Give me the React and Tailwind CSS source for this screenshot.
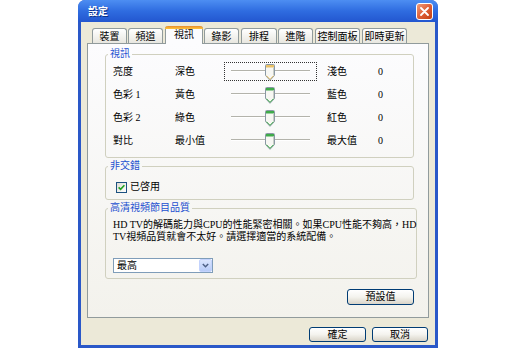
import React from "react";

const tabs = [
  { label: "裝置", w: "w-[35px]", ml: "ml-[5px]" },
  { label: "頻道", w: "w-[35px]", ml: "ml-[1px]" },
  { label: "視訊", w: "w-[38px]", ml: "ml-[2px]", active: true },
  { label: "錄影", w: "w-[35px]", ml: "ml-[1px]" },
  { label: "排程", w: "w-[36px]", ml: "ml-[2px]" },
  { label: "進階", w: "w-[35px]", ml: "ml-[1px]" },
  { label: "控制面板", w: "w-[45px]", ml: "ml-[2px]" },
  { label: "即時更新", w: "w-[45px]", ml: "ml-[2px]" },
];

const sliders = [
  { name: "亮度", low: "深色", high: "淺色", focus: true },
  { name: "色彩 1", low: "黃色", high: "藍色" },
  { name: "色彩 2", low: "綠色", high: "紅色" },
  { name: "對比", low: "最小值", high: "最大值" },
];

function Thumb({ focus }) {
  const top = focus ? "#e9c066" : "#3faa4a";
  return (
    <svg width="10" height="17" viewBox="0 0 10 17">
      <path
        d="M1.5 0.5 H8.5 Q9.5 0.5 9.5 1.5 V11.5 L5 16.3 L0.5 11.5 V1.5 Q0.5 0.5 1.5 0.5 Z"
        fill="#f7f7f3"
        stroke="#8a98a4"
      />
      <rect x="1" y="1" width="8" height="2.5" fill={top} />
      <path d="M1.4 11.6 L5 15.3 L8.6 11.6" fill="none" stroke={top} strokeWidth="1" />
      <path d="M8.5 3.5 V11.2" stroke="#c9cdc6" />
    </svg>
  );
}

function Slider({ focus }) {
  return (
    <div
      className={
        "w-[93px] h-[19px] relative flex items-center px-[6px] border border-dotted " +
        (focus ? "border-[#333]" : "border-transparent")
      }
    >
      <div className="w-full h-[2px] bg-[#b3b3ab] border-b border-white mt-[-2px]" />
      <div className="absolute left-[40px] top-[1px] flex">
        <Thumb focus={focus} />
      </div>
    </div>
  );
}

function Group({ title, children, className = "" }) {
  return (
    <fieldset className={"border border-[#d0d0bf] rounded-[3px] " + className}>
      <legend className="ml-[2px] px-[2px] h-[12px] leading-[12px] text-[10px] text-[#1b50d0]">
        {title}
      </legend>
      {children}
    </fieldset>
  );
}

function XpButton({ children, w }) {
  return (
    <div
      className={
        "h-[15px] rounded-[3px] border border-[#003c74] bg-gradient-to-b from-white via-[#f4f3ee] to-[#d9d4c8] flex items-center justify-center text-[10px] leading-none text-black " +
        w
      }
    >
      {children}
    </div>
  );
}

export default function App() {
  return (
    <div className="w-[520px] h-[348px] bg-white flex pl-[78px] font-['Liberation_Serif','Noto_Sans_CJK_TC',serif] text-[10px] text-black">
      <div className="w-[360px] h-[348px] flex flex-col rounded-t-[7px] bg-[#2a58c8] overflow-hidden">
        {/* title bar */}
        <div className="h-[22px] shrink-0 flex items-center justify-between pl-[10px] pr-[5px] bg-gradient-to-b from-[#4d8ef2] via-[#2f6ce0] to-[#2356cf]">
          <span className="text-white font-bold text-[10px] leading-none font-['Noto_Sans_CJK_TC',sans-serif] [text-shadow:1px_1px_0_#0b2f8a]">
            設定
          </span>
          <div className="w-[17px] h-[17px] rounded-[3px] border border-white bg-gradient-to-br from-[#ef9a78] via-[#df5f37] to-[#c2400f] flex items-center justify-center">
            <svg width="9" height="9" viewBox="0 0 9 9">
              <path d="M1 1 L8 8 M8 1 L1 8" stroke="white" strokeWidth="1.8" strokeLinecap="round" />
            </svg>
          </div>
        </div>

        {/* client */}
        <div className="flex-1 mx-[3px] mb-[3px] bg-[#ece9d8] flex flex-col px-[6px] pt-[4px]">
          {/* tabs */}
          <div className="h-[17px] flex items-end relative z-10">
            {tabs.map((t) =>
              t.active ? (
                <div
                  key={t.label}
                  className={
                    "h-[18px] -mb-px border-x border-[#919b9c] rounded-t-[3px] bg-[#fcfcfe] flex flex-col " +
                    t.w +
                    " " +
                    t.ml
                  }
                >
                  <div className="h-[3px] rounded-t-[3px] bg-gradient-to-b from-[#e68b2c] to-[#ffc73c] -mx-px" />
                  <div className="flex-1 flex justify-center pt-[1px] leading-[10px]">{t.label}</div>
                </div>
              ) : (
                <div
                  key={t.label}
                  className={
                    "h-[15px] border-t border-x border-[#919b9c] rounded-t-[3px] bg-gradient-to-b from-white to-[#e8e7e0] flex justify-center pt-[3px] leading-[10px] " +
                    t.w +
                    " " +
                    t.ml
                  }
                >
                  {t.label}
                </div>
              )
            )}
          </div>

          {/* panel */}
          <div className="h-[275px] shrink-0 border border-[#919b9c] bg-gradient-to-b from-[#fcfcfe] to-[#f3f2ec] flex flex-col pt-[4px] pl-[17px] pr-[14px]">
            <Group title="視訊">
              <div className="flex flex-col pl-[7px] pb-[5px]">
                {sliders.map((s) => (
                  <div key={s.name} className="h-[23px] flex items-center">
                    <span className="w-[62px] leading-none">{s.name}</span>
                    <span className="w-[49px] leading-none">{s.low}</span>
                    <Slider focus={s.focus} />
                    <span className="w-[51px] ml-[10px] leading-none">{s.high}</span>
                    <span className="leading-none">0</span>
                  </div>
                ))}
              </div>
            </Group>

            <Group title="非交錯" className="mt-[2px]">
              <div className="pt-[5px] pb-[2px] pl-[10px]">
                <div className="h-[20px] flex items-center gap-[3px]">
                  <span className="w-[11px] h-[11px] border border-[#1c5180] bg-gradient-to-br from-[#dcdcd5] to-white flex items-center justify-center">
                    <svg width="7" height="7" viewBox="0 0 7 7">
                      <path d="M0.6 3.4 L2.6 5.4 L6.4 1.2" stroke="#21a121" strokeWidth="1.6" fill="none" />
                    </svg>
                  </span>
                  <span className="leading-none">已啓用</span>
                </div>
              </div>
            </Group>

            <Group title="高清視頻節目品質" className="mt-[2px]">
              <div className="flex flex-col pl-[7px] pt-[5px] pb-[5px]">
                <p className="leading-[12px] whitespace-nowrap">
                  HD TV的解碼能力與CPU的性能緊密相關。如果CPU性能不夠高，HD
                  <br />
                  TV視頻品質就會不太好。請選擇適當的系統配備。
                </p>
                <div className="mt-[15px] w-[100px] h-[15px] border border-[#7f9db9] bg-white flex items-center">
                  <span className="flex-1 pl-[3px] leading-none">最高</span>
                  <span className="w-[13px] h-[13px] rounded-[2px] bg-gradient-to-b from-[#dbe6fd] to-[#b7cbf7] border border-[#c3d3fd] flex items-center justify-center">
                    <svg width="7" height="5" viewBox="0 0 7 5">
                      <path d="M0.8 1 L3.5 3.7 L6.2 1" stroke="#4d6185" strokeWidth="1.5" fill="none" />
                    </svg>
                  </span>
                </div>
              </div>
            </Group>

            <div className="mt-[10px] flex justify-end">
              <div className="h-[16px] w-[67px] rounded-[3px] border border-[#003c74] bg-gradient-to-b from-white via-[#f4f3ee] to-[#d9d4c8] flex items-center justify-center leading-none">
                預設值
              </div>
            </div>
          </div>

          {/* buttons */}
          <div className="mt-[9px] flex justify-end gap-[6px] pr-[1px]">
            <XpButton w="w-[57px]">確定</XpButton>
            <XpButton w="w-[56px]">取消</XpButton>
          </div>
        </div>
      </div>
    </div>
  );
}
